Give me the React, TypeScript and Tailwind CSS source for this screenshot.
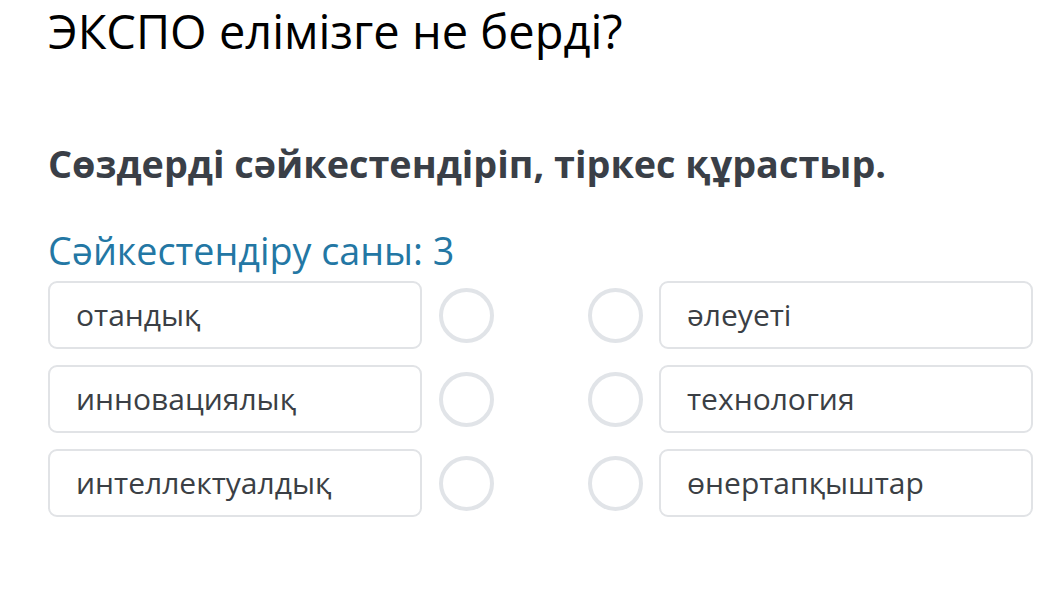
const leftItems = ['отандық', 'инновациялық', 'интеллектуалдық'];
const rightItems = ['әлеуеті', 'технология', 'өнертапқыштар'];

function WordBox({ text }: { text: string }) {
  return (
    <div className="w-[374px] h-[68px] flex items-center pl-[26px] border-2 border-[#e1e3e6] rounded-[9px] bg-white">
      <span className="text-[30px] text-[#3b3f45] leading-none">{text}</span>
    </div>
  );
}

function Dot() {
  return <div className="w-[55px] h-[55px] rounded-full border-[4px] border-[#e1e4e8]" />;
}

export default function App() {
  return (
    <div className="w-[1044px] h-[604px] bg-white pl-[48px] pt-[3px] font-['Open_Sans',sans-serif] overflow-hidden">
      <h1 className="text-[47px] leading-[56px] text-black font-normal">ЭКСПО елімізге не берді?</h1>

      <h2 className="mt-[82px] text-[37.8px] leading-[46px] font-bold text-[#3a3f47]">
        Сөздерді сәйкестендіріп, тіркес құрастыр.
      </h2>

      <p className="mt-[41px] text-[37.7px] leading-[46px] text-[#2377a4]">Сәйкестендіру саны: 3</p>

      <div className="mt-[7px] flex flex-col gap-[16px]">
        {leftItems.map((left, i) => (
          <div key={left} className="flex items-center">
            <WordBox text={left} />
            <div className="ml-[17px]">
              <Dot />
            </div>
            <div className="ml-[94px]">
              <Dot />
            </div>
            <div className="ml-[16px]">
              <WordBox text={rightItems[i]} />
            </div>
          </div>
        ))}
      </div>
    </div>
  );
}
